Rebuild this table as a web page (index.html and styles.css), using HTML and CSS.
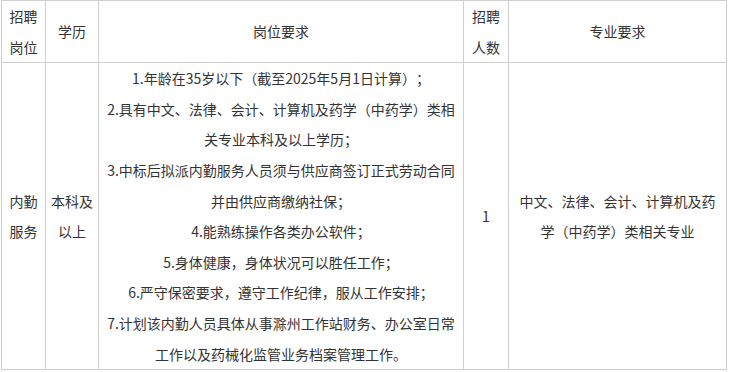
FILE: index.html
```html
<!DOCTYPE html>
<html lang="zh-CN">
<head>
<meta charset="utf-8">
<title>招聘岗位</title>
<link rel="stylesheet" href="styles.css">
</head>
<body>
<table class="job-table">
  <colgroup>
    <col class="c-post">
    <col class="c-edu">
    <col class="c-req">
    <col class="c-num">
    <col class="c-major">
  </colgroup>
  <thead>
    <tr>
      <th>招聘岗位</th>
      <th>学历</th>
      <th>岗位要求</th>
      <th>招聘人数</th>
      <th>专业要求</th>
    </tr>
  </thead>
  <tbody>
    <tr>
      <td>内勤服务</td>
      <td>本科及以上</td>
      <td class="req">
        <p>1.年龄在35岁以下（截至2025年5月1日计算）；</p>
        <p>2.具有中文、法律、会计、计算机及药学（中药学）类相关专业本科及以上学历；</p>
        <p>3.中标后拟派内勤服务人员须与供应商签订正式劳动合同并由供应商缴纳社保；</p>
        <p>4.能熟练操作各类办公软件；</p>
        <p>5.身体健康，身体状况可以胜任工作；</p>
        <p>6.严守保密要求，遵守工作纪律，服从工作安排；</p>
        <p>7.计划该内勤人员具体从事滁州工作站财务、办公室日常工作以及药械化监管业务档案管理工作。</p>
      </td>
      <td>1</td>
      <td>中文、法律、会计、计算机及药学（中药学）类相关专业</td>
    </tr>
  </tbody>
</table>
</body>
</html>
```

FILE: styles.css
```css
html, body {
  margin: 0;
  padding: 0;
  background: #ffffff;
}

body {
  padding-left: 1px;
  font-family: "Noto Sans CJK SC", "Noto Sans", sans-serif;
  font-size: 14px;
  color: #333333;
  text-spacing-trim: space-all;
}

.job-table {
  border-collapse: collapse;
  table-layout: fixed;
  width: 726px;
}

.c-post { width: 44px; }
.c-edu { width: 53px; }
.c-req { width: 365px; }
.c-num { width: 45px; }
.c-major { width: 218px; }

.job-table th,
.job-table td {
  border: 1px solid #cfcfcf;
  padding: 0 5px;
  line-height: 30.6px;
  text-align: center;
  vertical-align: middle;
  font-weight: normal;
  word-break: break-all;
  text-spacing-trim: space-all;
}

.req p {
  margin: 0;
}
```
